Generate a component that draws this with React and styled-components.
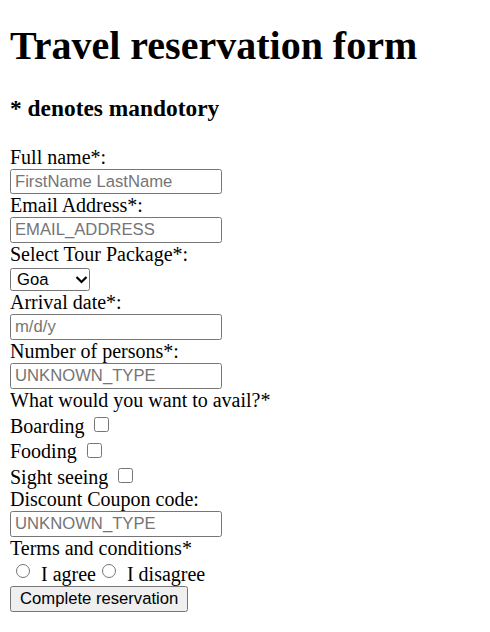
import React from "react";
import styled, { createGlobalStyle } from "styled-components";

const Global = createGlobalStyle`
  body {
    margin: 10px;
    font-family: "Liberation Serif", "Times New Roman", serif;
    font-size: 20px;
    color: #000;
    background: #fff;
  }
`;

const Title = styled.h1`
  font-size: 40px;
  font-weight: bold;
  margin: 11.5px 0 26.8px;
`;

const Note = styled.h3`
  font-size: 23.4px;
  font-weight: bold;
  margin: 23.4px 0;
`;

const Form = styled.form`
  margin: 0;
`;

const Label = styled.label``;

const TextInput = styled.input`
  box-sizing: border-box;
  width: 212px;
  height: 25.67px;
  vertical-align: top;
  font-family: "Liberation Sans", Arial, sans-serif;
  font-size: 16.67px;
  padding: 1px 4px;
  border: 1px solid #767676;
  border-radius: 2.5px;
  background: #fff;
  margin: 0;
  &::placeholder {
    color: #757575;
  }
`;

const SelectWrap = styled.span`
  position: relative;
  display: inline-block;
  vertical-align: top;
  margin-top: 2.3px;
`;

const Select = styled.select`
  appearance: none;
  display: block;
  box-sizing: border-box;
  width: 80px;
  height: 23px;
  padding: 0 0 0 6px;
  font-family: "Liberation Sans", Arial, sans-serif;
  font-size: 16.67px;
  border: 1px solid #767676;
  border-radius: 2.5px;
  background: #fff;
  color: #000;
  margin: 0;
`;

const Chevron = styled.svg`
  position: absolute;
  right: 2px;
  top: 6.5px;
  pointer-events: none;
`;

const Check = styled.input`
  appearance: none;
  box-sizing: border-box;
  width: 15px;
  height: 15px;
  margin: 5.6px 4px 0 5px;
  border: 1.25px solid #767676;
  border-radius: 2.5px;
  background: #fff;
  vertical-align: baseline;
  &:checked {
    background: #0075ff;
    border-color: #0075ff;
  }
`;

const Radio = styled.input`
  appearance: none;
  box-sizing: border-box;
  width: 14px;
  height: 14px;
  margin: 3.85px 6px 3px 6px;
  border: 1.25px solid #767676;
  border-radius: 50%;
  background: #fff;
  vertical-align: baseline;
  &:checked {
    border: 4px solid #0075ff;
  }
`;

const Button = styled.button`
  font-family: "Liberation Sans", Arial, sans-serif;
  font-size: 16.67px;
  padding: 1px 9px;
  height: 26px;
  white-space: nowrap;
  border: 1px solid #767676;
  border-radius: 2.5px;
  background: #efefef;
  color: #000;
  margin: 0;
`;

export default function App() {
  return (
    <>
      <Global />
      <Title>Travel reservation form</Title>
      <Note>* denotes mandotory</Note>
      <Form onSubmit={(e) => e.preventDefault()}>
        <Label>Full name*:</Label>
        <br />
        <TextInput type="text" placeholder="FirstName LastName" />
        <br />
        <Label>Email Address*:</Label>
        <br />
        <TextInput type="text" placeholder="EMAIL_ADDRESS" />
        <br />
        <Label>Select Tour Package*:</Label>
        <br />
        <SelectWrap>
          <Select defaultValue="Goa">
            <option>Goa</option>
            <option>Kerala</option>
            <option>Shimla</option>
          </Select>
          <Chevron width="13" height="9" viewBox="0 0 13 9">
            <path d="M1.5 2 L6.5 7 L11.5 2" fill="none" stroke="#000" strokeWidth="2.2" />
          </Chevron>
        </SelectWrap>
        <br />
        <Label>Arrival date*:</Label>
        <br />
        <TextInput type="text" placeholder="m/d/y" />
        <br />
        <Label>Number of persons*:</Label>
        <br />
        <TextInput type="text" placeholder="UNKNOWN_TYPE" />
        <br />
        <Label>What would you want to avail?*</Label>
        <br />
        <Label>Boarding</Label> <Check type="checkbox" />
        <br />
        <Label>Fooding</Label> <Check type="checkbox" />
        <br />
        <Label>Sight seeing</Label> <Check type="checkbox" />
        <br />
        <Label>Discount Coupon code:</Label>
        <br />
        <TextInput type="text" placeholder="UNKNOWN_TYPE" />
        <br />
        <Label>Terms and conditions*</Label>
        <br />
        <Radio type="radio" name="terms" /> <Label>I agree</Label>
        <Radio type="radio" name="terms" /> <Label>I disagree</Label>
        <br />
        <Button type="submit">Complete reservation</Button>
      </Form>
    </>
  );
}
